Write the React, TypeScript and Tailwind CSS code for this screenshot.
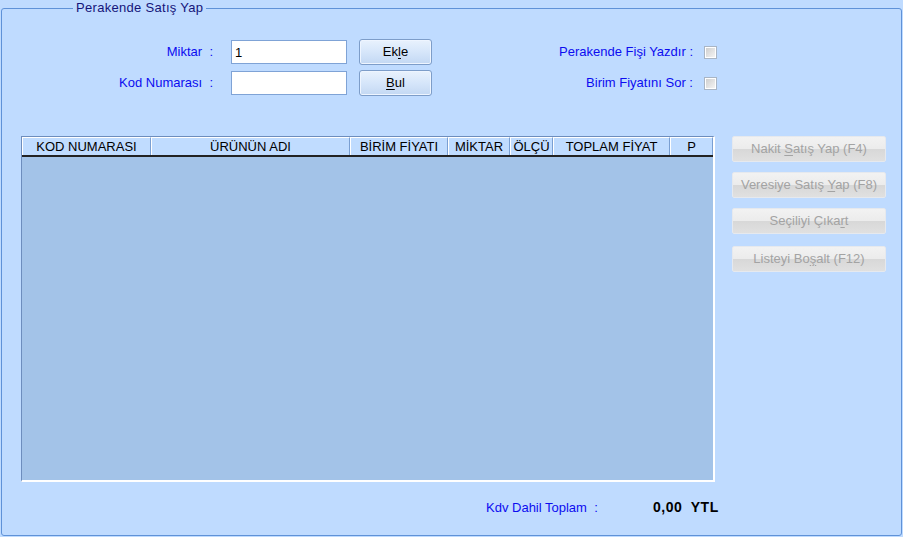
import type { ReactNode } from "react";

const font = { fontFamily: '"Liberation Sans", Arial, sans-serif' };

function U({ children }: { children: ReactNode }) {
  return <span className="underline underline-offset-2">{children}</span>;
}

function Button({ children }: { children: ReactNode }) {
  return (
    <button className="ml-[12px] flex h-[26px] w-[73px] items-center justify-center rounded-[3px] border border-[#7d9dc9] bg-gradient-to-b from-[#e9f2fd] via-[#d6e6fa] to-[#c3d8f3] text-[13px] text-black shadow-[inset_0_0_0_1px_#eef5ff]">
      <span>{children}</span>
    </button>
  );
}

function SideButton({ children, className }: { children: ReactNode; className?: string }) {
  return (
    <button
      disabled
      className={`flex h-[26px] w-[154px] items-center justify-center rounded-[2px] border border-[#e6e9ee] bg-[linear-gradient(#f2f2f2_0%,#ececec_48%,#d8d8d8_52%,#e0e0e0_100%)] text-[13px] text-[#a3a3a3] ${className ?? ""}`}
    >
      <span className="whitespace-pre">{children}</span>
    </button>
  );
}

function CheckBox() {
  return (
    <div className="ml-[11px] h-[13px] w-[13px] border border-[#a9b5c4] bg-white p-[1px]">
      <div className="h-full w-full bg-gradient-to-br from-[#cfcfcf] to-[#f4f4f4]" />
    </div>
  );
}

const columns: [string, string][] = [
  ["KOD NUMARASI", "w-[129px]"],
  ["ÜRÜNÜN ADI", "w-[199px]"],
  ["BİRİM FİYATI", "w-[98px]"],
  ["MİKTAR", "w-[62px]"],
  ["ÖLÇÜ", "w-[43px]"],
  ["TOPLAM FİYAT", "w-[117px]"],
  ["P", "flex-1"],
];

export default function App() {
  return (
    <div className="h-[537px] w-[903px] overflow-hidden bg-[#bfdbff]" style={font}>
      <fieldset className="ml-[1px] h-[536px] w-[901px] rounded-[3px] border border-[#5f92d8]">
        <legend className="ml-[71px] px-[3px] text-[13px] tracking-[0.3px] leading-[16px] text-[#15157a]">Perakende Satış Yap</legend>

        <div className="mt-[23px] flex h-[26px] items-center">
          <div className="w-[211px] text-right text-[13px] text-[#0c0cf0]">Miktar&nbsp; :</div>
          <input
            defaultValue="1"
            className="ml-[18px] h-[24px] w-[116px] border border-[#7fa3d6] bg-white px-[3px] text-[13px] text-black outline-none"
          />
          <Button>
            Ek<U>l</U>e
          </Button>
          <div className="w-[261px] text-right text-[13px] text-[#0c0cf0]">Perakende Fişi Yazdır :</div>
          <CheckBox />
        </div>

        <div className="mt-[5px] flex h-[26px] items-center">
          <div className="w-[211px] text-right text-[13px] text-[#0c0cf0]">Kod Numarası&nbsp; :</div>
          <input className="ml-[18px] h-[24px] w-[116px] border border-[#7fa3d6] bg-white px-[3px] text-[13px] text-black outline-none" />
          <Button>
            <U>B</U>ul
          </Button>
          <div className="w-[261px] text-right text-[13px] text-[#0c0cf0]">Birim Fiyatını Sor :</div>
          <CheckBox />
        </div>

        <div className="mt-[40px] flex items-start">
          <div className="ml-[19px] flex h-[346px] w-[694px] flex-col border-t border-l border-[#6d8dbd] border-r-2 border-b-2 border-r-white border-b-white bg-[#a3c3e8]">
            <div className="flex h-[20px] border-b-2 border-[#222]">
              {columns.map(([label, w]) => (
                <div
                  key={label}
                  className={`${w} flex items-center justify-center border-t border-l border-white border-r border-r-[#7a9fd2] bg-[#c0dcff] text-[13px] leading-none text-black`}
                >
                  {label}
                </div>
              ))}
            </div>
          </div>

          <div className="ml-[17px] flex flex-col">
            <SideButton>
              Nakit <U>S</U>atış Yap (F4)
            </SideButton>
            <SideButton className="mt-[10px]">
              Veresiye Satış <U>Y</U>ap (F8)
            </SideButton>
            <SideButton className="mt-[10px]">
              Seçiliyi Çıka<U>r</U>t
            </SideButton>
            <SideButton className="mt-[12px]">
              Listeyi Bo<U>ş</U>alt (F12)
            </SideButton>
          </div>
        </div>

        <div className="mt-[15px] flex items-center text-[13px]">
          <div className="ml-[484px] w-[167px] text-[#0c0cf0]">Kdv Dahil Toplam&nbsp; :</div>
          <div className="whitespace-pre text-[14px] font-bold tracking-[0.5px] text-black">0,00  YTL</div>
        </div>
      </fieldset>
    </div>
  );
}
